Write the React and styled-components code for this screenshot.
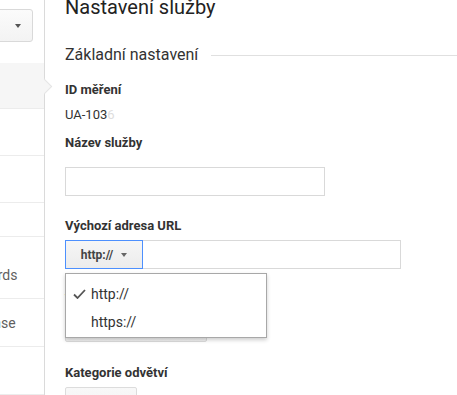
import React from "react";
import styled, { createGlobalStyle } from "styled-components";

const GlobalStyle = createGlobalStyle`
  html, body {
    margin: 0;
    padding: 0;
    background: #fff;
    overflow: hidden;
    font-family: Roboto, "Liberation Sans", Arial, sans-serif;
  }
`;

const Page = styled.div`
  display: flex;
  width: 457px;
  height: 395px;
  overflow: hidden;
`;

const Sidebar = styled.div`
  position: relative;
  flex: 0 0 44px;
  border-right: 1px solid #dadada;
`;

const SidebarInner = styled.div`
  width: 200px;
  margin-left: -156px;
`;

const SelectArea = styled.div`
  height: 63px;
  padding: 9px 11px 0 20px;
  box-sizing: border-box;
`;

const AccountSelect = styled.div`
  height: 33px;
  box-sizing: border-box;
  border: 1px solid #d9d9d9;
  border-radius: 3px;
  background: linear-gradient(#fbfbfb, #f3f3f3);
  display: flex;
  align-items: center;
  justify-content: flex-end;
  padding-right: 11px;
  font-size: 13px;
  color: #444;
`;

const Caret = styled.span`
  display: inline-block;
  width: 0;
  height: 0;
  border-left: 3.5px solid transparent;
  border-right: 3.5px solid transparent;
  border-top: 4px solid ${(p) => p.$color || "#555"};
  margin-left: ${(p) => p.$gap || 0}px;
`;

const NavItem = styled.div`
  position: relative;
  height: ${(p) => p.$h}px;
  box-sizing: border-box;
  padding: ${(p) => p.$top || 0}px 0 0 43px;
  display: flex;
  align-items: ${(p) => (p.$top ? "flex-start" : "center")};
  border-bottom: 1px solid #ececec;
  font-size: 14px;
  color: #5f5f5f;
  white-space: nowrap;
  background: ${(p) => (p.$active ? "#f6f6f6" : "transparent")};

  ${(p) =>
    p.$active &&
    `
    &::after {
      content: "";
      position: absolute;
      right: -6px;
      top: 50%;
      width: 10px;
      height: 10px;
      margin-top: -5px;
      background: #f6f6f6;
      border-top: 1px solid #e4e4e4;
      border-right: 1px solid #e4e4e4;
      transform: rotate(45deg);
    }
  `}
`;

const Main = styled.div`
  flex: 1;
  position: relative;
  padding-left: 20px;
  color: #333;
`;

const Title = styled.h1`
  margin: -7px 0 0;
  font-size: 20px;
  line-height: 28px;
  font-weight: 400;
  color: #222;
  white-space: nowrap;
`;

const SectionHead = styled.div`
  display: flex;
  align-items: center;
  margin-top: 24px;
  font-size: 16px;
  line-height: 20px;
  color: #333;
  white-space: nowrap;

  &::after {
    content: "";
    flex: 1;
    height: 1px;
    margin-left: 13px;
    background: #e0e0e0;
  }
`;

const Field = styled.div`
  margin-top: ${(p) => p.$mt}px;
`;

const Label = styled.div`
  font-size: 13px;
  line-height: 16px;
  font-weight: 700;
  color: #333;
  margin-bottom: ${(p) => p.$mb}px;
  white-space: nowrap;
`;

const Value = styled.div`
  font-size: 13px;
  line-height: 16px;
  color: #333;
`;

const Faded = styled.span`
  color: #ddd;
`;

const TextBox = styled.div`
  width: ${(p) => p.$w}px;
  height: 29px;
  box-sizing: border-box;
  border: 1px solid #d9d9d9;
  background: #fff;
`;

const GreyBox = styled.div`
  width: ${(p) => p.$w}px;
  height: 29px;
  box-sizing: border-box;
  border: 1px solid #dcdcdc;
  border-radius: 2px;
  background: linear-gradient(#f8f8f8, #f1f1f1);
`;

const UrlRow = styled.div`
  position: relative;
  display: flex;
  height: 29px;
`;

const ProtocolButton = styled.div`
  width: 78px;
  box-sizing: border-box;
  border: 1px solid #4d90fe;
  background: linear-gradient(#f6f6f6, #ececec);
  display: flex;
  align-items: center;
  justify-content: center;
  font-size: 12px;
  font-weight: 700;
  color: #444;
`;

const UrlInput = styled.div`
  width: 258px;
  box-sizing: border-box;
  border: 1px solid #d9d9d9;
  border-left: none;
  background: #fff;
`;

const Menu = styled.ul`
  position: absolute;
  left: 0;
  top: 33px;
  z-index: 5;
  width: 202px;
  margin: 0;
  padding: 6px 0 1px;
  box-sizing: border-box;
  list-style: none;
  background: #fff;
  border: 1px solid #a8a8a8;
  box-shadow: 0 2px 4px rgba(0, 0, 0, 0.2);
`;

const MenuItem = styled.li`
  position: relative;
  height: 28px;
  padding-left: 25px;
  display: flex;
  align-items: center;
  font-size: 14px;
  color: #333;
`;

const Check = styled.svg`
  position: absolute;
  left: 7px;
  top: 9px;
`;

const navItems = [
  { label: "Nastavení služby", h: 46, active: true },
  { label: "Správa", h: 47 },
  { label: "Sledování", h: 47 },
  { label: "Propojení", h: 34 },
  { label: "Propojení s AdWords", h: 62, top: 30 },
  { label: "Propojení s AdSense", h: 48 },
  { label: "Ad Exchange", h: 48 },
];

export default function App() {
  return (
    <Page>
      <GlobalStyle />
      <Sidebar>
        <SidebarInner>
          <SelectArea>
            <AccountSelect>
              <Caret />
            </AccountSelect>
          </SelectArea>
          {navItems.map((it) => (
            <NavItem key={it.label} $h={it.h} $top={it.top} $active={it.active}>
              {it.label}
            </NavItem>
          ))}
        </SidebarInner>
      </Sidebar>

      <Main>
        <Title>Nastavení služby</Title>
        <SectionHead>Základní nastavení</SectionHead>

        <Field $mt={17}>
          <Label $mb={9}>ID měření</Label>
          <Value>
            UA-103<Faded>6</Faded>
          </Value>
        </Field>

        <Field $mt={12}>
          <Label $mb={16}>Název služby</Label>
          <TextBox $w={260} />
        </Field>

        <Field $mt={22}>
          <Label $mb={6}>Výchozí adresa URL</Label>
          <UrlRow>
            <ProtocolButton>
              http://
              <Caret $gap={8} $color="#666" />
            </ProtocolButton>
            <UrlInput />
            <Menu>
              <MenuItem>
                <Check width="13" height="10" viewBox="0 0 13 10">
                  <polyline
                    points="1,5.5 4.5,9 12,1"
                    fill="none"
                    stroke="#555"
                    strokeWidth="1.8"
                  />
                </Check>
                http://
              </MenuItem>
              <MenuItem>https://</MenuItem>
            </Menu>
          </UrlRow>
        </Field>

        <Field $mt={22}>
          <Label $mb={6}>Výchozí zobrazení</Label>
          <GreyBox $w={142} />
        </Field>

        <Field $mt={23}>
          <Label $mb={6}>Kategorie odvětví</Label>
          <GreyBox $w={72} />
        </Field>
      </Main>
    </Page>
  );
}
